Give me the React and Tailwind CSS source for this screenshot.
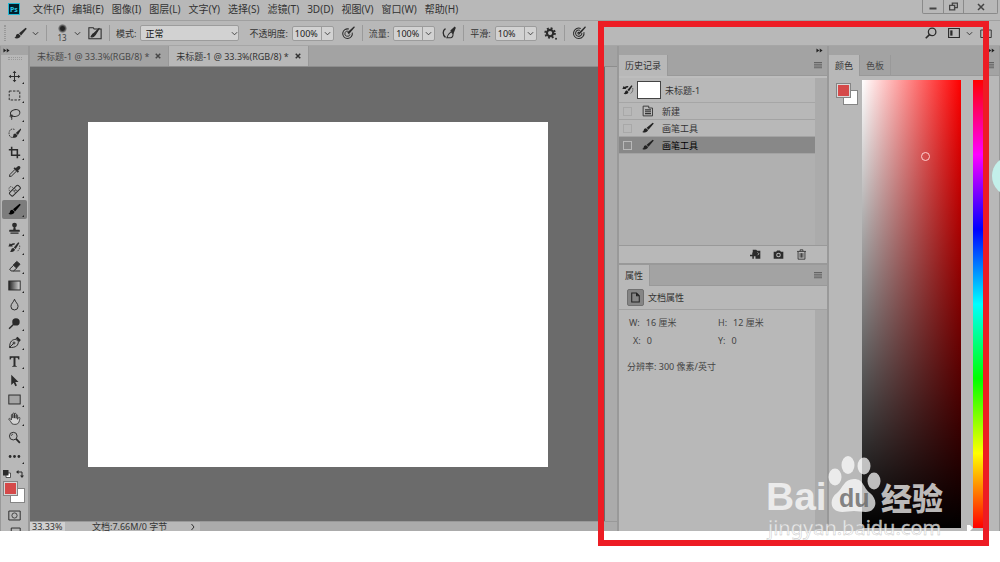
import React, { useState } from 'react';

const MENUS = [
  '文件(F)', '编辑(E)', '图像(I)', '图层(L)', '文字(Y)', '选择(S)',
  '滤镜(T)', '3D(D)', '视图(V)', '窗口(W)', '帮助(H)',
];

// Shared svg wrapper, everything is drawn on a 16x16 grid
const Icon = ({ className = 'size-4', children }) => (
  <svg
    viewBox="0 0 16 16"
    className={`shrink-0 ${className}`}
    fill="none"
    stroke="currentColor"
    strokeWidth="1.2"
    aria-hidden="true"
  >
    {children}
  </svg>
);

const BrushShape = () => (
  <g fill="currentColor" stroke="none">
    <path d="M14.300.900 6.200 7.800l2.500 2.600 7-8.300z" />
    <path d="M5.700 8.500c-1.700-.3-3 .7-3.300 2.300-.2 1.200-.8 2-2 2.500 2.600 1.500 7 .9 7.700-2.500z" />
  </g>
);

const HistoryBrushShape = () => (
  <g>
    <g fill="currentColor" stroke="none">
      <path d="M12.600 1.500 7.200 7.900l2.200 1.900L14 2.600z" />
      <path d="M6.700 8.600c-1.500-.1-2.400.8-2.700 2.200-.2 1.100-.8 1.700-1.800 2.200 2.500 1.200 5.900.3 6.400-2.500z" />
      <path d="M.5 6.700 2.200 2.800l1.300 1.300C5 2.800 6.700 2.400 8.500 2.800L8 4.600c-1.100-.2-2.100.1-3 .9l1 1.200z" />
    </g>
    <path d="M14.300 5.500c.6 2.500-.2 5-2.600 7" strokeWidth="0.9" strokeDasharray="2 1" />
  </g>
);

const Brush = ({ className }) => <Icon className={className}><BrushShape /></Icon>;

const TOOLS = [
  {
    name: '移动工具',
    art: (
      <g>
        <path d="M8 3v10M3 8h10" />
        <path d="m8 .8 2.300 2.900H5.700zM8 15.200l2.300-2.900H5.700zM.8 8l2.900-2.300v4.600zM15.200 8l-2.900-2.300v4.600z" fill="currentColor" stroke="none" />
      </g>
    ),
  },
  { name: '矩形选框工具', art: <rect x="1.500" y="2.500" width="13" height="11" strokeDasharray="3 1.600" /> },
  {
    name: '套索工具',
    art: (
      <g>
        <ellipse cx="8.800" cy="6.200" rx="5.900" ry="4.200" transform="rotate(-12 8.800 6.200)" />
        <path d="M3.500 8.500C1.500 10 3 12 5 11s.5-3-1-2.300c-1 .8 1.500 2.800.5 5.800" />
      </g>
    ),
  },
  {
    name: '快速选择工具',
    art: (
      <g>
        <path d="M8 3C5 1.500 1.500 3 1.300 7.500S4 13.500 6.500 12.500" strokeDasharray="2 1" strokeWidth="1" />
        <g fill="currentColor" stroke="none">
          <path d="M15.600 1.800 9.600 7.500l2.600 2.400 4-6.900z" />
          <path d="M9 8c-1.700 0-2.500 1.100-2.500 2.700-.1 1.100-.6 1.800-1.600 2.300 2.900.9 6.500-.2 6.700-3z" />
        </g>
      </g>
    ),
  },
  { name: '裁剪工具', art: <path d="M4.500 1v10.500H15M1 4.500h10.500V15M12 11.500h3" strokeWidth="1.900" /> },
  {
    name: '吸管工具',
    art: (
      <g>
        <path d="m8.500 5.500-6.200 6.300-.5 2.400 2.400-.5 6.300-6.200" />
        <path d="m6.800 4.300 1.500-1.500 1.500 1.200C11 2.300 12.500.8 14.200 1.600s1.500 3.200-1.700 5l1 1.400-1.500 1.500z" fill="currentColor" stroke="none" />
      </g>
    ),
  },
  {
    name: '污点修复画笔工具',
    art: (
      <g>
        <path d="M6 4.500C3.500 2 1 3.500 1.200 6.500 1.300 8 2 9 3 9.500" strokeDasharray="1.500 1" strokeWidth="0.900" />
        <rect x="1" y="5.300" width="15" height="5.800" rx="1.600" transform="rotate(-45 8.500 8.200)" />
        <path d="m5.800 7.500 3.500 3.500M8 5.300l3.500 3.500" strokeWidth="0.900" />
        <path d="m8.500 7.200 1 1-1 1-1-1z" fill="currentColor" stroke="none" />
      </g>
    ),
  },
  { name: '画笔工具', art: <BrushShape /> },
  {
    name: '仿制图章工具',
    art: (
      <g fill="currentColor" stroke="none">
        <circle cx="8" cy="3.800" r="3" />
        <path d="M7 6h2l.6 3.500h3.900c.8 0 1 .4 1 1V12h-13v-1.500c0-.6.200-1 1-1h3.900zM3 13h10v1.500H3z" />
      </g>
    ),
  },
  { name: '历史记录画笔工具', art: <HistoryBrushShape /> },
  {
    name: '橡皮擦工具',
    art: (
      <g>
        <path d="M7 6.500 2 11.200l1.800 2.300h3l4.200-3.800M6.500 13.500H15" />
        <path d="m6.500 6.300 4.300-4.600 4 3.500-4.300 4.700z" fill="currentColor" />
      </g>
    ),
  },
  {
    name: '渐变工具',
    art: (
      <g>
        <defs>
          <linearGradient id="toolGradient">
            <stop offset="0" stopColor="#222" />
            <stop offset="1" stopColor="#ddd" />
          </linearGradient>
        </defs>
        <rect x="1" y="2.500" width="14" height="11" fill="url(#toolGradient)" />
      </g>
    ),
  },
  { name: '模糊工具', art: <path d="M8 1.500C7 5 3.600 7 3.600 10.300a4.400 4.400 0 0 0 8.800 0C12.400 7 9 5 8 1.500z" /> },
  {
    name: '减淡工具',
    art: (
      <g>
        <circle cx="9.800" cy="6" r="4.600" fill="currentColor" stroke="none" />
        <path d="M7 8.800 1.300 14.400" strokeWidth="1.800" />
      </g>
    ),
  },
  {
    name: '钢笔工具',
    art: (
      <g>
        <path d="M1.800 14.200c.3-3.500.7-6 2.500-8 1.600-1.600 3.500-2 5.500-2.200l3 3c-.2 2-.6 3.800-2.200 5.200-2 1.700-5.300 2-8.800 2zM2 14l4.800-4.800" />
        <circle cx="7.400" cy="8.600" r="1.200" />
        <path d="m9.500 2.800 2.300-2L15.800 5l-2 2.300z" fill="currentColor" stroke="none" />
      </g>
    ),
  },
  { name: '横排文字工具', art: <path d="M2 1.500h12v4h-1.300c-.3-1.500-.8-2.100-2-2.100H9.200v9.200c0 .6.300.8 1.600.9v1H5.200v-1c1.300-.1 1.600-.3 1.600-.9V3.400H5.300c-1.200 0-1.700.6-2 2.100H2z" fill="currentColor" stroke="none" /> },
  { name: '路径选择工具', art: <path d="M4 1v12.500l3-2.800 2 4.300 2-1-2-4.200h4z" fill="currentColor" stroke="none" /> },
  { name: '矩形工具', art: <rect x="1" y="2.500" width="14" height="11" fill="#a5a5a5" /> },
  {
    name: '抓手工具',
    art: <path d="M5 14.500C3.500 12.500 2.500 10 .8 8.500c.6-1 1.800-.7 3.400 1.200V3.800c0-1.300 1.800-1.300 1.800 0V7.500 2.300c0-1.400 2-1.400 2 0v5.200-4.900c0-1.300 2-1.300 2 0v5.200V4.300c0-1.200 1.800-1.200 1.800 0V9c.6-1.500 1-2.300 1.800-2.400 1.200-.1 1.200 1 .8 2.300-.5 2.600-1 4.300-2.600 5.600-2 1-4.600 1-6.800 0z" fill="#d2d2d2" strokeWidth="1" />,
  },
  {
    name: '缩放工具',
    art: (
      <g>
        <circle cx="6.500" cy="6.300" r="4.700" />
        <path d="M10 9.800 14.600 14.500" strokeWidth="2.200" />
        <path d="M4 6c.2-1.300 1-2 2.300-2.200" strokeWidth="0.900" />
      </g>
    ),
    single: true,
  },
  {
    name: '编辑工具栏',
    art: (
      <g fill="currentColor" stroke="none">
        <circle cx="2.600" cy="8" r="1.700" />
        <circle cx="8" cy="8" r="1.700" />
        <circle cx="13.400" cy="8" r="1.700" />
      </g>
    ),
  },
];

const Chevron = () => (
  <Icon className="size-[7px]"><path d="m2 5 6 6 6-6" strokeWidth="2" /></Icon>
);

const Collapse = () => (
  <button type="button" aria-label="折叠面板" className="text-[#222]">
    <Icon className="size-[7px]">
      <path d="M1 3.500 7.500 8 1 12.500zM8.500 3.500 15 8l-6.500 4.500z" fill="currentColor" stroke="none" />
    </Icon>
  </button>
);

const PanelMenu = () => (
  <button type="button" aria-label="面板菜单" className="text-[#5c5c5c]">
    <Icon className="size-2"><path d="M0 3h16M0 6.500h16M0 10h16M0 13.500h16" strokeWidth="1.800" /></Icon>
  </button>
);

const Separator = () => <span className="h-4 w-px shrink-0 bg-[#9a9a9a]" />;

const PercentField = ({ label, value }) => (
  <div className="flex shrink-0 items-center gap-1">
    <label htmlFor={label}>{label}:</label>
    <div className="flex h-[15px] rounded-xs border border-[#9c9c9c] bg-[#d2d2d2]">
      <input id={label} defaultValue={value} className="w-7 bg-transparent px-0.5 text-[9px] text-[#222] outline-none" />
      <button type="button" aria-label={`${label}滑块`} className="flex w-3 items-center justify-center border-l border-[#9c9c9c]">
        <Chevron />
      </button>
    </div>
  </div>
);

const IconButton = ({ label, children }) => (
  <button type="button" aria-label={label} className="flex shrink-0 items-center text-[#2b2b2b]">
    {children}
  </button>
);

const MenuBar = () => (
  <header className="flex h-[21px] shrink-0 items-center border-b border-[#a0a0a0] pb-[2px] pl-2">
    <svg viewBox="0 0 12 12" className="mr-[13px] size-3 shrink-0" aria-hidden="true">
      <rect x="0.500" y="0.500" width="11" height="11" fill="#001d2b" stroke="#22b8d4" />
      <text x="2" y="8.500" fontSize="7" fontFamily="Noto Sans" fontWeight="bold" fill="#28c4e0">Ps</text>
    </svg>
    <nav className="flex gap-2 whitespace-nowrap">
      {MENUS.map((menu) => (
        <button type="button" key={menu}>{menu}</button>
      ))}
    </nav>
    <div className="mr-[2px] ml-auto flex h-[14px] self-start rounded-b-xs border border-t-0 border-[#8a8a8a] text-[#444]">
      <button type="button" aria-label="最小化" className="flex w-5 items-center justify-center">
        <Icon className="size-2"><path d="M1 11h14" strokeWidth="4" /></Icon>
      </button>
      <button type="button" aria-label="还原" className="flex w-5 items-center justify-center border-l border-[#8a8a8a]">
        <Icon className="size-[9px]">
          <path d="M6 5V2h9v8h-4M1 6h9v8H1z" strokeWidth="2.500" />
        </Icon>
      </button>
      <button type="button" aria-label="关闭" className="flex w-[34px] items-center justify-center border-l border-[#8a8a8a]">
        <Icon className="size-2"><path d="m2 2 12 12M14 2 2 14" strokeWidth="3" /></Icon>
      </button>
    </div>
  </header>
);

const OptionsBar = () => (
  <div className="flex h-[25px] shrink-0 items-center gap-[7px] border-b border-[#a6a6a6] pr-2 pl-1 text-[9px] whitespace-nowrap">
    <span className="h-4 w-[2px] shrink-0 border-x border-dotted border-[#999]" />
    <IconButton label="画笔预设">
      <Brush className="ml-[1px] size-[13px]" />
      <span className="ml-[5px]"><Chevron /></span>
    </IconButton>
    <Separator />
    <IconButton label="画笔大小">
      <span className="flex w-4 flex-col items-center text-[8px] leading-[9px] text-[#444]">
        <span className="size-[9px] rounded-full bg-radial from-[#222] from-30% to-[#b8b8b8] to-75%" />
        13
      </span>
      <span className="ml-1"><Chevron /></span>
    </IconButton>
    <IconButton label="画笔面板">
      <Icon className="size-[14px]">
        <path d="M1 2h5l1 1.500h8v11H1z" />
        <path d="m13 2.500-6 5.700 1.400 1.600zM6.700 8.600c-1.500 0-1.700 1.400-3.200 3.600 2 .6 4-.2 4.300-2.200z" fill="currentColor" />
      </Icon>
    </IconButton>
    <Separator />
    <div className="-ml-px flex shrink-0 items-center gap-1">
      <label htmlFor="mode">模式:</label>
      <div className="relative flex items-center">
        <select
          id="mode"
          defaultValue="正常"
          className="h-4 w-[99px] appearance-none rounded-xs border border-[#9c9c9c] bg-[#d2d2d2] pl-1 leading-none text-[#111]"
        >
          <option>正常</option>
          <option>溶解</option>
        </select>
        <span className="pointer-events-none absolute right-px"><Chevron /></span>
      </div>
    </div>
    <div className="ml-[3px]"><PercentField label="不透明度" value="100%" /></div>
    <IconButton label="不透明度压力">
      <Icon className="size-[14px]">
        <path d="M9 3.500a5.500 5.500 0 1 0 3.800 4" />
        <path d="M8.500 6a3 3 0 1 0 1.800 3.500" strokeWidth="1" />
        <path d="M15 .2 7.200 7.500l1.800 2L15.800 1.500z" fill="currentColor" stroke="none" />
      </Icon>
    </IconButton>
    <Separator />
    <div className="-ml-px"><PercentField label="流量" value="100%" /></div>
    <IconButton label="喷枪">
      <Icon className="size-[14px]">
        <path d="M4 3C.5 5 .5 10.500 4 13" strokeWidth="1.500" />
        <path d="M5.500 13.500c1-3 3-5.500 5-7l2 2.200c.5 2-.5 4.500-2.300 4.800z" />
        <path d="m9.500 5 5-4.500 1.300 1.500L13 9z" fill="currentColor" stroke="none" />
      </Icon>
    </IconButton>
    <Separator />
    <div className="-ml-px"><PercentField label="平滑" value="10%" /></div>
    <IconButton label="平滑选项">
      <Icon className="size-[13px]">
        <circle cx="7.500" cy="7.500" r="3.900" strokeWidth="2.600" />
        <circle cx="7.500" cy="7.500" r="5.900" strokeWidth="2.400" strokeDasharray="2.320 2.310" />
        <circle cx="14.800" cy="14.500" r="1.200" fill="currentColor" stroke="none" />
      </Icon>
    </IconButton>
    <Separator />
    <IconButton label="大小压力">
      <Icon className="size-[14px]">
        <path d="M10 2.800a6 6 0 1 0 3.600 4.200M9.300 5a3.600 3.600 0 1 0 2 3" />
        <circle cx="7.700" cy="8.300" r="1" />
        <path d="M15 .3 8.300 7l1.500 1.500L15.900 1.500z" fill="currentColor" stroke="none" />
      </Icon>
    </IconButton>
    <div className="ml-auto flex items-center gap-[11px]">
      <IconButton label="搜索">
        <Icon className="size-3">
          <circle cx="9.500" cy="6.500" r="5" strokeWidth="1.700" />
          <path d="M6 10.200 1 15" strokeWidth="2.200" />
        </Icon>
      </IconButton>
      <IconButton label="工作区">
        <Icon className="size-3">
          <path d="M.8 2h14.400v12H.8z" strokeWidth="1.500" />
          <path d="M3 4.500h3v7H3z" fill="currentColor" stroke="none" />
        </Icon>
        <span className="ml-1.5"><Chevron /></span>
      </IconButton>
      <span className="-ml-1">
        <IconButton label="共享">
          <Icon className="size-3"><path d="M1 4h14v10H1zM8 10V1.500" /></Icon>
        </IconButton>
      </span>
    </div>
  </div>
);

const ColorSwatches = () => (
  <div className="relative h-[21px] w-[21px] shrink-0">
    <button type="button" aria-label="背景色" className="absolute right-0 bottom-0 size-[15px] border border-[#858585] bg-white" />
    <button type="button" aria-label="前景色" className="absolute top-0 left-0 size-[13px] border border-[#d8d8d8] bg-[#d54a4a] outline outline-[#858585]" />
  </div>
);

const ToolBar = () => {
  const [activeTool, setActiveTool] = useState('画笔工具');

  return (
    <aside className="flex w-[30px] shrink-0 flex-col overflow-hidden border-r-2 border-l border-[#999] text-[#2b2b2b]">
      <div className="flex h-[9px] shrink-0 items-center bg-[#a5a5a5] pl-[2px]"><Collapse /></div>
      <div className="mx-auto mt-[2px] mb-[7px] h-[3px] w-[14px] shrink-0 border-y border-dotted border-[#999]" />
      {TOOLS.map((tool) => (
        <button
          type="button"
          key={tool.name}
          aria-label={tool.name}
          onClick={() => setActiveTool(tool.name)}
          className={`relative mx-[1px] flex h-[19px] shrink-0 items-center justify-center rounded-xs ${
            activeTool === tool.name ? 'bg-[#7d7d7d] text-black' : ''
          }`}
        >
          <Icon className="size-[13px]">{tool.art}</Icon>
          {!tool.single && (
            <svg viewBox="0 0 2 2" className="absolute right-[3px] bottom-[2px] size-[2px]" aria-hidden="true">
              <path d="M2 0v2H0z" fill="#222" />
            </svg>
          )}
        </button>
      ))}
      <div className="mt-1 flex shrink-0 justify-between pr-1 pl-[2px]">
        <IconButton label="默认前景色和背景色">
          <Icon className="size-2">
            <path d="M6 6h9v9H6z" fill="#fff" strokeWidth="1.500" />
            <path d="M0 0h11v11H0z" fill="currentColor" stroke="none" />
          </Icon>
        </IconButton>
        <IconButton label="切换前景色和背景色">
          <Icon className="size-2">
            <path d="M3 4h9v9" strokeWidth="2" />
            <path d="M0 4 5 0v8zM12 16l-4-5h8z" fill="currentColor" stroke="none" />
          </Icon>
        </IconButton>
      </div>
      <div className="mt-1 ml-[3px] shrink-0"><ColorSwatches /></div>
      <div className="mt-1.5 flex shrink-0 flex-col items-center gap-1">
        <IconButton label="快速蒙版">
          <Icon className="size-[13px]">
            <path d="M1 2.500h14v11H1z" />
            <circle cx="8" cy="8" r="3.200" strokeWidth="1" />
          </Icon>
        </IconButton>
        <IconButton label="屏幕模式">
          <Icon className="size-[13px]"><path d="M4 2.500h11v9H4z" /></Icon>
        </IconButton>
      </div>
    </aside>
  );
};

const DocumentTab = ({ active }) => (
  <div
    className={`flex items-center gap-[6px] border-r border-[#999] px-[7px] ${
      active ? 'bg-[#b8b8b8] text-[#333]' : 'text-[#484848]'
    }`}
  >
    <button type="button">未标题-1 @ 33.3%(RGB/8) *</button>
    <button type="button" aria-label="关闭文档">
      <Icon className="size-[6px]"><path d="m2 2 12 12M14 2 2 14" strokeWidth="4" /></Icon>
    </button>
  </div>
);

const DocumentArea = () => (
  <main className="flex min-w-0 flex-1 flex-col">
    <div className="flex h-[21px] shrink-0 border-b border-[#8d8d8d] bg-[#a3a3a3] text-[9px] whitespace-nowrap">
      <DocumentTab />
      <DocumentTab active />
    </div>
    <div className="flex min-h-0 flex-1">
      <div className="flex flex-1 items-center justify-center bg-[#6b6b6b]">
        <div className="aspect-[4/3] w-4/5 bg-white" />
      </div>
      <div className="w-3 shrink-0 bg-[#ababab]" />
    </div>
    <div className="flex h-[10px] shrink-0 items-center border-t border-[#999] bg-[#ababab] text-[9px] leading-[9px] whitespace-nowrap">
      <input aria-label="缩放比例" defaultValue="33.33%" className="h-full w-[35px] bg-[#d0d0d0] pl-[2px] outline-none" />
      <div className="flex h-full w-[135px] items-center justify-between bg-[#b8b8b8] pr-[3px] pl-[27px]">
        <span>文档:7.66M/0 字节</span>
        <button type="button" aria-label="状态栏选项">
          <Icon className="size-2"><path d="m5 2 5 6-5 6" strokeWidth="2" /></Icon>
        </button>
      </div>
    </div>
  </main>
);

const PanelTabs = ({ tabs }) => (
  <div className="flex h-[21px] shrink-0 items-stretch border-b border-[#999] bg-[#a3a3a3]">
    {tabs.map((tab, i) => (
      <button
        type="button"
        key={tab}
        className={`-mb-px border-r border-[#999] px-1.5 ${i === 0 ? 'bg-[#b8b8b8] text-[#333]' : 'text-[#484848]'}`}
      >
        {tab}
      </button>
    ))}
    <div className="mr-[5px] ml-auto flex items-center"><PanelMenu /></div>
  </div>
);

const HISTORY = [
  { id: 1, label: '新建', kind: 'doc' },
  { id: 2, label: '画笔工具', kind: 'brush' },
  { id: 3, label: '画笔工具', kind: 'brush' },
];

const HistoryPanel = () => {
  const [selected, setSelected] = useState(3);

  return (
    <section className="flex h-[208px] shrink-0 flex-col">
      <PanelTabs tabs={['历史记录']} />
      <div className="flex min-h-0 flex-1 border-t-2 border-[#bdbdbd]">
        <div className="min-w-0 flex-1 bg-[#b0b0b0]">
          <div className="flex h-[25px] items-center border-b border-[#a6a6a6] bg-[#b8b8b8] pl-[3px]">
            <Icon className="size-3 text-[#222]"><HistoryBrushShape /></Icon>
            <span className="ml-[3px] h-[18px] w-6 border border-[#444] bg-white" />
            <span className="ml-1">未标题-1</span>
          </div>
          {HISTORY.map((item) => (
            <div
              key={item.id}
              className={`flex h-[17px] items-center border-b border-[#a3a3a3] pl-1 ${
                selected === item.id ? 'bg-[#888] text-black' : 'bg-[#b8b8b8]'
              }`}
            >
              <input
                type="checkbox"
                aria-label={`历史源 ${item.label} ${item.id}`}
                className={`size-[9px] appearance-none border ${
                  selected === item.id ? 'border-[#b8b8b8]' : 'border-[#a8a8a8]'
                }`}
              />
              <button type="button" onClick={() => setSelected(item.id)} className="ml-2.5 flex flex-1 items-center gap-2">
                {item.kind === 'brush' ? (
                  <Brush className="size-3 text-[#222]" />
                ) : (
                  <Icon className="size-3">
                    <path d="M1.500 14.500v-13H9V4h5v10.500z" />
                    <path d="M4 6.500h8M4 9h8M4 11.500h8" strokeWidth="1.500" />
                  </Icon>
                )}
                {item.label}
              </button>
            </div>
          ))}
        </div>
        <div className="w-3 bg-[#ababab]" />
      </div>
      <div className="flex h-[18px] shrink-0 items-center justify-end gap-3 border-t border-[#999] pr-5 text-[#222]">
        <IconButton label="从当前状态创建新文档">
          <Icon className="size-[11px]">
            <path d="M4 1h5l1.500 1.500H15V14H8V9H4z" fill="currentColor" stroke="none" />
            <path d="M0 9.500h9M4.500 5v9" strokeWidth="2.200" />
            <path d="m11 5 2 2-2 2" stroke="#b8b8b8" />
          </Icon>
        </IconButton>
        <IconButton label="创建新快照">
          <Icon className="size-[11px]">
            <path d="M1 4h3.500L6 2h4l1.500 2H15v10H1z" fill="currentColor" stroke="none" />
            <circle cx="8" cy="8.800" r="2.600" stroke="#b8b8b8" strokeWidth="1.500" />
          </Icon>
        </IconButton>
        <IconButton label="删除当前状态">
          <Icon className="size-[11px]">
            <path d="M1.500 3.500h13M6 3V1.200h4V3M3 4v10.800h10V4M6 6v6.500M8 6v6.500M10 6v6.500" />
          </Icon>
        </IconButton>
      </div>
    </section>
  );
};

const PropertiesPanel = () => (
  <section className="flex min-h-0 flex-1 flex-col border-t-2 border-[#999]">
    <PanelTabs tabs={['属性']} />
    <div className="flex h-6 shrink-0 items-center gap-1 border-b border-[#a3a3a3] pl-2">
      <span className="flex size-[17px] items-center justify-center rounded-xs border border-[#707070] bg-[#858585] text-[#222]">
        <Icon className="size-[11px]"><path d="M2.500 1.500h7l4 4v9h-11zM9.500 1.500v4h4" strokeWidth="1.500" /></Icon>
      </span>
      文档属性
    </div>
    <div className="flex min-h-0 flex-1">
      <div className="flex-1 pt-1 pr-2 pl-2 text-[#444]">
        <dl className="grid grid-cols-2 pl-[2px] leading-[18px]">
          <div className="flex gap-1.5"><dt>W:</dt><dd>16 厘米</dd></div>
          <div className="flex gap-1.5"><dt>H:</dt><dd>12 厘米</dd></div>
          <div className="flex gap-1.5 pl-1"><dt>X:</dt><dd>0</dd></div>
          <div className="flex gap-1.5"><dt>Y:</dt><dd>0</dd></div>
        </dl>
        <p className="mt-2 leading-[18px]">分辨率: 300 像素/英寸</p>
      </div>
      <div className="w-3 bg-[#ababab]" />
    </div>
  </section>
);

const ColorPanel = () => (
  <section className="flex w-[171px] shrink-0 flex-col border-r border-[#999]">
    <div className="flex h-[9px] shrink-0 items-center justify-end bg-[#a3a3a3] pr-1"><Collapse /></div>
    <PanelTabs tabs={['颜色', '色板']} />
    <div className="flex min-h-0 flex-1 pt-1 pr-3 pb-[3px] pl-2">
      <div className="pt-1"><ColorSwatches /></div>
      <div className="relative ml-1 flex-1 bg-[linear-gradient(to_bottom,transparent,#000),linear-gradient(to_right,#fff,#f00)]">
        <span className="absolute top-[16%] left-[60%] size-[9px] rounded-full border border-[#ffd0d0]" />
      </div>
      <svg viewBox="0 0 6 8" className="ml-1.5 h-2 w-1.5 translate-y-1 self-end" aria-hidden="true">
        <path d="M0 1h3l3 3-3 3H0z" fill="#fff" />
      </svg>
      <div className="w-[14px] bg-[linear-gradient(to_bottom,#f00,#f0f,#00f,#0ff,#0f0,#ff0,#f00)]" />
    </div>
  </section>
);

const Watermark = () => (
  <svg
    viewBox="0 0 190 90"
    className="pointer-events-none absolute right-[50px] bottom-[18px] h-[90px] w-[190px]"
    fill="#fff"
    fillOpacity="0.72"
    aria-hidden="true"
  >
    <g fontFamily="Liberation Sans, Noto Sans CJK SC, sans-serif">
      <text x="6" y="56" fontSize="39" fontWeight="bold">Bai</text>
      <ellipse cx="75" cy="23" rx="6.500" ry="8.500" />
      <ellipse cx="88" cy="11" rx="6.500" ry="9" />
      <ellipse cx="104" cy="12" rx="6.500" ry="8.500" />
      <ellipse cx="114" cy="27" rx="6.500" ry="8.500" />
      <path d="M94 25c-10 0-11 9-17 14-6 4-7 12-3 16 5 5 13 2 20 2s15 3 19-2c4-4 3-11-3-16-7-5-6-14-16-14z" />
      <text x="79" y="53" fontSize="25" fontWeight="bold" fill="#666" fillOpacity="0.800">du</text>
      <text x="121" y="56" fontSize="31" fontWeight="900">经验</text>
      <text x="8" y="81" fontSize="20" fontFamily="Noto Sans" stroke="#bbb" strokeWidth="0.400">jingyan.baidu.com</text>
    </g>
  </svg>
);

const App = () => (
  <div className="relative h-screen overflow-hidden bg-white pb-[31px] font-['Noto_Sans','Noto_Sans_CJK_SC',sans-serif] text-[10px] leading-none text-[#333]">
    <div className="flex h-full flex-col bg-[#b8b8b8]">
      <MenuBar />
      <OptionsBar />
      <div className="flex min-h-0 flex-1">
        <ToolBar />
        <DocumentArea />
        <div className="flex w-[212px] shrink-0 flex-col border-r-2 border-l-2 border-[#999] text-[9px]">
          <div className="flex h-[9px] shrink-0 items-center justify-end bg-[#a3a3a3] pr-1"><Collapse /></div>
          <HistoryPanel />
          <PropertiesPanel />
        </div>
        <div className="flex shrink-0 text-[9px]"><ColorPanel /></div>
      </div>
    </div>

    {/* floating bubble half hidden behind the window edge */}
    <button type="button" aria-label="悬浮球" className="absolute top-[156px] -right-8 size-10 rounded-full bg-[#c3f0ea]" />
    <Watermark />
    <div className="pointer-events-none absolute top-[21px] right-[11px] bottom-4 w-[391px] border-6 border-[#ed1c24]" />
  </div>
);

export default App;
